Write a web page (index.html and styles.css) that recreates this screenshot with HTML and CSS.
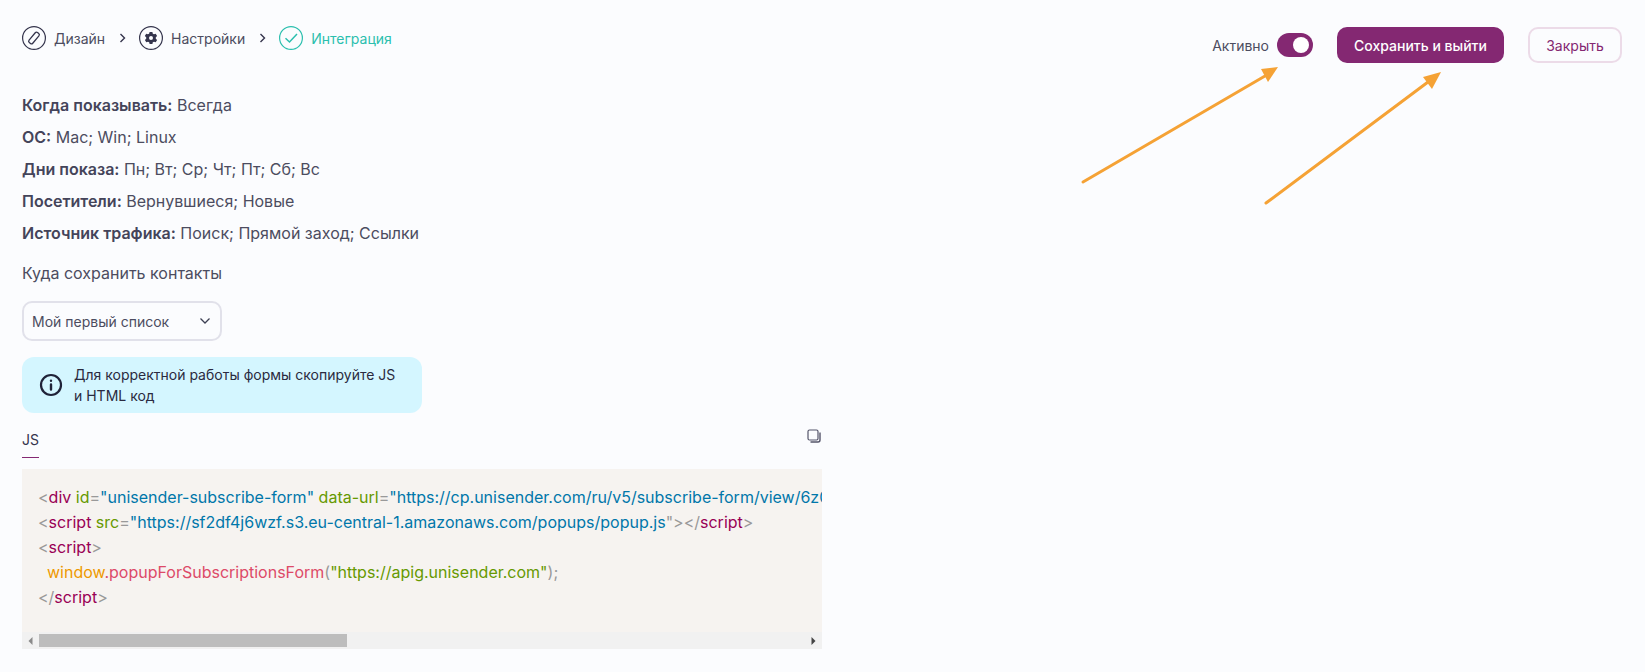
FILE: index.html
```html
<!DOCTYPE html>
<html lang="ru">
<head>
<meta charset="utf-8">
<title>Интеграция</title>
<link rel="stylesheet" href="styles.css">
</head>
<body>
<div class="page">
  <header class="topbar">
    <nav class="steps">
      <div class="step">
        <svg class="step-icon" viewBox="0 0 24 24" fill="none" stroke="#34344c" stroke-width="1.200"><circle cx="12" cy="12" r="11.400"/><g stroke-width="1.300"><rect x="9.600" y="5.600" width="4.800" height="12.800" rx="1.600" transform="rotate(40 12 12)"/></g></svg>
        <span>Дизайн</span>
      </div>
      <svg class="chev" viewBox="0 0 8 10" fill="none" stroke="#34344c" stroke-width="1.400"><path d="M1.500 1 5.500 5 1.500 9"/></svg>
      <div class="step">
        <svg class="step-icon" viewBox="0 0 24 24" fill="none" stroke="#34344c" stroke-width="1.200"><circle cx="12" cy="12" r="11.400"/><path fill="#34344c" stroke="none" fill-rule="evenodd" d="M10.600 6h2.800l.4 1.700 1.200.6 1.700-.6 1.400 2.400-1.300 1.200v1.400l1.300 1.200-1.400 2.400-1.700-.6-1.200.6-.4 1.700h-2.800l-.4-1.700-1.200-.6-1.700.6-1.400-2.400 1.300-1.200v-1.400L5.800 10.100l1.400-2.400 1.700.6 1.200-.6zM12 10a2 2 0 1 0 0 4 2 2 0 0 0 0-4z"/></svg>
        <span>Настройки</span>
      </div>
      <svg class="chev" viewBox="0 0 8 10" fill="none" stroke="#34344c" stroke-width="1.400"><path d="M1.500 1 5.500 5 1.500 9"/></svg>
      <div class="step step-active">
        <svg class="step-icon" viewBox="0 0 24 24" fill="none" stroke="#2bbfae" stroke-width="1.200"><circle cx="12" cy="12" r="11.400"/><path stroke-width="1.500" d="M6.500 12.300 10.500 16 18 8"/></svg>
        <span>Интеграция</span>
      </div>
    </nav>
    <div class="actions">
      <span class="active-label">Активно</span>
      <span class="toggle"><span class="knob"></span></span>
      <button class="btn btn-primary">Сохранить и выйти</button>
      <button class="btn btn-ghost">Закрыть</button>
    </div>
  </header>

  <main class="content">
    <p class="row"><b>Когда показывать:</b> Всегда</p>
    <p class="row"><b>ОС:</b> Mac; Win; Linux</p>
    <p class="row"><b>Дни показа:</b> Пн; Вт; Ср; Чт; Пт; Сб; Вс</p>
    <p class="row"><b>Посетители:</b> Вернувшиеся; Новые</p>
    <p class="row"><b>Источник трафика:</b> Поиск; Прямой заход; Ссылки</p>
    <p class="save-label">Куда сохранить контакты</p>
    <div class="select">
      <span>Мой первый список</span>
      <svg class="select-chev" viewBox="0 0 12 8" fill="none" stroke="#3d4053" stroke-width="1.300"><path d="M1.500 1.500 6 6l4.500-4.500"/></svg>
    </div>
    <div class="alert">
      <svg class="alert-icon" viewBox="0 0 24 24" fill="none" stroke="#1f2238" stroke-width="2.200"><circle cx="12" cy="12" r="10"/><path stroke-linecap="round" stroke-width="2.400" d="M12 11.500v5M12 7.600v.1"/></svg>
      <span>Для корректной работы формы скопируйте JS и&nbsp;HTML код</span>
    </div>
    <div class="tabs">
      <span class="tab">JS</span>
      <svg class="copy" viewBox="0 0 14 14" fill="none" stroke="#55556a" stroke-width="1.200"><rect x="1" y="1" width="10" height="10" rx="1.500"/><path stroke-width="1.400" d="M13 3.500v7.500a2 2 0 0 1-2 2H3.500"/></svg>
    </div>
    <div class="code">
<pre class="code-body"><span class="p">&lt;</span><span class="t">div</span> <span class="a">id</span><span class="p">=</span><span class="v">"unisender-subscribe-form"</span> <span class="a">data-url</span><span class="p">=</span><span class="v">"https://cp.unisender.com/ru/v5/subscribe-form/view/6z0</span>
<span class="p">&lt;</span><span class="t">script</span> <span class="a">src</span><span class="p">=</span><span class="v">"https://sf2df4j6wzf.s3.eu-central-1.amazonaws.com/popups/popup.js</span><span class="p">"&gt;&lt;/</span><span class="t">script</span><span class="p">&gt;</span>
<span class="p">&lt;</span><span class="t">script</span><span class="p">&gt;</span>
  <span class="w">window</span><span class="f">.popupForSubscriptionsForm</span><span class="p">(</span><span class="s">"https://apig.unisender.com"</span><span class="p">);</span>
<span class="p">&lt;/</span><span class="t">script</span><span class="p">&gt;</span></pre>
      <div class="scrollbar">
        <svg class="arrow" viewBox="0 0 6 10"><path fill="#8a8a8a" d="M5 1v8L1 5z"/></svg>
        <div class="track"><div class="thumb"></div></div>
        <svg class="arrow" viewBox="0 0 6 10"><path fill="#444" d="M1 1v8l4-4z"/></svg>
      </div>
    </div>
  </main>

  <svg class="annot" viewBox="0 0 1645 672" fill="none">
    <g stroke="#f5a235" stroke-width="3" stroke-linecap="round">
      <path d="M1083 182 1265 76"/>
      <path d="M1266 203 1428 82"/>
    </g>
    <g fill="#f5a235">
      <path d="M1278 67 1261 69 1268 82z"/>
      <path d="M1441 72 1423 77 1432 89z"/>
    </g>
  </svg>
</div>
</body>
</html>
```

FILE: styles.css
```css
* { box-sizing: border-box; }
html, body { margin: 0; padding: 0; height: 100%; }
body {
  background: #fbfcfe;
  color: #4c4c60;
  font-family: Inter, "Liberation Sans", sans-serif;
  font-size: 16px;
  overflow: hidden;
}
.page { position: relative; height: 672px; padding: 0 23px 0 22px; }
.topbar { display: flex; justify-content: space-between; align-items: flex-start; height: 89px; }
.steps { display: flex; align-items: center; padding-top: 26px; font-size: 14px; }
.step { display: flex; align-items: center; gap: 8px; }
.step-icon { width: 24px; height: 24px; flex: none; }
.step-active { color: #2bbfae; }
.chev { width: 8px; height: 10px; margin: 0 12px 0 14px; }
.actions { display: flex; align-items: center; padding-top: 27px; font-size: 14px; }
.active-label { margin-right: 8px; }
.toggle { display: flex; justify-content: flex-end; align-items: center; width: 36px; height: 24px; padding-right: 4px; border-radius: 12px; background: #842872; margin-right: 24px; }
.knob { width: 16px; height: 16px; border-radius: 50%; background: #fff; }
.btn { height: 36px; border-radius: 10px; font: 500 14px Inter, "Liberation Sans", sans-serif; }
.btn-primary { width: 167px; border: 0; background: #842872; color: #fff; margin-right: 24px; }
.btn-ghost { width: 94px; border: 2px solid #ecdbe8; background: #fbfcfe; color: #842872; font-weight: 400; }
.content { width: 800px; }
.row { margin: 0; height: 32px; line-height: 32px; }
.row b { font-weight: 600; color: #44445a; }
.save-label { margin: 12px 0 0; height: 24px; line-height: 24px; }
.select { display: flex; justify-content: space-between; align-items: center; width: 200px; height: 40px; margin-top: 16px; padding: 0 9px 0 8px; border: 2px solid #e1e1ea; border-radius: 10px; font-size: 14px; }
.select-chev { width: 12px; height: 8px; }
.alert { display: flex; align-items: center; gap: 11px; width: 400px; height: 56px; margin-top: 16px; padding: 0 18px 0 17px; background: #d4f6ff; border-radius: 12px; color: #2a2a40; font-size: 14px; line-height: 21px; }
.alert-icon { width: 24px; height: 24px; flex: none; }
.tabs { display: flex; justify-content: space-between; align-items: flex-start; height: 56px; }
.tab { display: block; height: 45px; padding-top: 17px; line-height: 20px; border-bottom: 1px solid #842872; font-size: 14px; color: #34344c; }
.copy { width: 14px; height: 14px; margin-top: 16px; margin-right: 1px; }
.code { width: 800px; height: 180px; background: #f6f3f0; display: flex; flex-direction: column; }
.code-body { flex: 1; margin: 0; padding: 16px 16px 0; overflow: hidden; font: 16px/25px Inter, "Liberation Sans", sans-serif; white-space: pre; color: #999; }
.p { color: #999; }
.t { color: #905; }
.a { color: #690; }
.v { color: #07a; }
.w { color: #e90; }
.f { color: #dd4a68; }
.s { color: #690; }
.scrollbar { display: flex; align-items: center; height: 17px; background: #f1f1f1; flex: none; }
.arrow { width: 17px; height: 10px; }
.track { flex: 1; height: 13px; }
.thumb { width: 308px; height: 13px; background: #bdbdbd; }
.annot { position: absolute; left: 0; top: 0; width: 1645px; height: 672px; pointer-events: none; }
```
